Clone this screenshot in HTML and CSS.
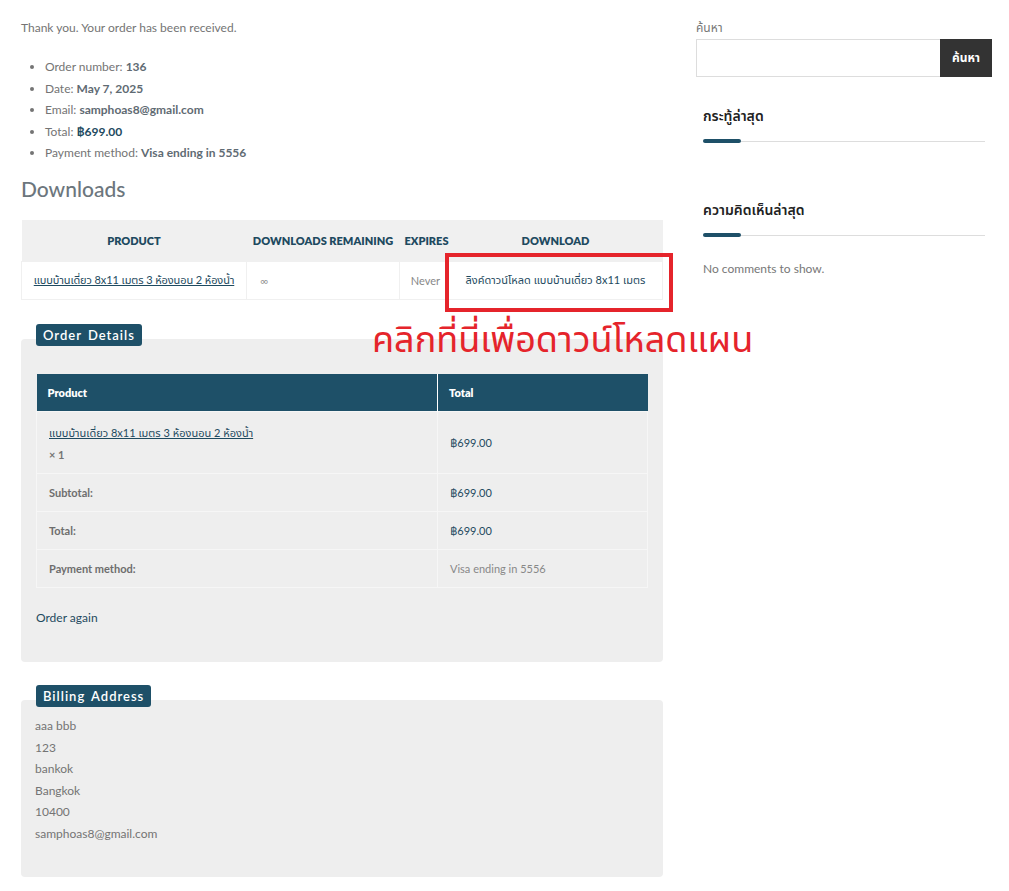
FILE: index.html
```html
<html lang="th">

<head>
  <meta charset="UTF-8">
  <meta name="viewport" content="width=device-width, initial-scale=1.0">
  <title>Order received</title>
  <link rel="stylesheet" href="styles.css">
</head>

<body>
  <div class="page">
    <div class="main">
      <p class="thanks">Thank you. Your order has been received.</p>

      <ul class="overview">
        <li>Order number: <strong>136</strong></li>
        <li>Date: <strong>May 7, 2025</strong></li>
        <li>Email: <strong>samphoas8@gmail.com</strong></li>
        <li>Total: <strong class="price">฿699.00</strong></li>
        <li>Payment method: <strong>Visa ending in 5556</strong></li>
      </ul>

      <div class="downloads">
        <h2>Downloads</h2>
        <table class="dl-table">
          <thead>
            <tr>
              <th class="c-product">Product</th>
              <th class="c-remain">Downloads remaining</th>
              <th class="c-expires">Expires</th>
              <th class="c-file">Download</th>
            </tr>
          </thead>
          <tbody>
            <tr>
              <td class="c-product"><a href="#">แบบบ้านเดี่ยว 8x11 เมตร 3 ห้องนอน 2 ห้องน้ำ</a></td>
              <td class="c-remain">∞</td>
              <td class="c-expires">Never</td>
              <td class="c-file"><a href="#">ลิงค์ดาวน์โหลด แบบบ้านเดี่ยว 8x11 เมตร</a></td>
            </tr>
          </tbody>
        </table>
        <!-- กรอบแดงกับข้อความแนะนำ วางทับบนตาราง -->
        <div class="mark-box"></div>
        <div class="mark-text">คลิกที่นี่เพื่อดาวน์โหลดแผน</div>
      </div>

      <section class="panel order-panel">
        <span class="badge">Order Details</span>
        <table class="od-table">
          <thead>
            <tr>
              <th>Product</th>
              <th>Total</th>
            </tr>
          </thead>
          <tbody>
            <tr class="item-row">
              <td>
                <a href="#">แบบบ้านเดี่ยว 8x11 เมตร 3 ห้องนอน 2 ห้องน้ำ</a>
                <div class="qty">× 1</div>
              </td>
              <td class="amount">฿699.00</td>
            </tr>
            <tr>
              <th>Subtotal:</th>
              <td class="amount">฿699.00</td>
            </tr>
            <tr>
              <th>Total:</th>
              <td class="amount">฿699.00</td>
            </tr>
            <tr>
              <th>Payment method:</th>
              <td class="muted">Visa ending in 5556</td>
            </tr>
          </tbody>
        </table>
        <a class="again" href="#">Order again</a>
      </section>

      <section class="panel billing-panel">
        <span class="badge">Billing Address</span>
        <address>
          aaa bbb<br>
          123<br>
          bankok<br>
          Bangkok<br>
          10400<br>
          samphoas8@gmail.com
        </address>
      </section>
    </div>

    <aside class="sidebar">
      <form class="search">
        <label for="s">ค้นหา</label>
        <div class="search-row">
          <input id="s" type="text">
          <button type="button">ค้นหา</button>
        </div>
      </form>

      <div class="widget">
        <h3>กระทู้ล่าสุด</h3>
      </div>

      <div class="widget">
        <h3>ความคิดเห็นล่าสุด</h3>
        <p class="empty">No comments to show.</p>
      </div>
    </aside>
  </div>
</body>

</html>
```

FILE: styles.css
```css
* {
  padding: 0;
  margin: 0;
  box-sizing: border-box;
}

body {
  background-color: #fff;
  color: #747474;
  font-family: Lato, "Noto Sans", "Noto Sans Thai", sans-serif;
  font-size: 12px;
}

a {
  color: #1e4a60;
}

.page {
  display: flex;
  padding: 19px 17px 0 21px;
  gap: 33px;
}

.main {
  width: 642px;
}

.thanks {
  line-height: 17px;
  margin-bottom: 20px;
}

.overview {
  list-style: disc;
  padding-left: 24px;
  margin-bottom: 11px;
}

.overview li {
  line-height: 21.6px;
}

.overview strong {
  color: #5f6b73;
}

.overview .price {
  color: #1e4a60;
}

/* downloads */
.downloads {
  position: relative;
}

.downloads h2 {
  font-size: 21px;
  font-weight: 500;
  color: #6c767d;
  line-height: 28px;
  margin-bottom: 17px;
}

.dl-table {
  width: 100%;
  border-collapse: collapse;
}

.dl-table th {
  background-color: #f0f0f0;
  color: #1e4a60;
  font-size: 11px;
  font-weight: 800;
  text-transform: uppercase;
  height: 42px;
  text-align: center;
}

.dl-table td {
  height: 38px;
  border: 1px solid #f0f0f0;
  font-size: 11px;
  padding: 0 10px;
  white-space: nowrap;
}

.dl-table .c-product {
  width: 225px;
  text-align: center;
}

.dl-table td.c-product {
  padding: 0 6px;
  letter-spacing: -0.1px;
}

.dl-table .c-remain {
  width: 153px;
}

.dl-table td.c-remain {
  padding-left: 13px;
  color: #999;
}

.dl-table .c-expires {
  width: 49px;
  text-align: right;
}

.dl-table td.c-expires {
  padding-right: 8px;
  color: #888;
}

.dl-table .c-file {
  text-align: center;
}

.dl-table .c-file a {
  text-decoration: none;
}

.mark-box {
  position: absolute;
  left: 424px;
  top: 78px;
  width: 228px;
  height: 59px;
  border: 4px solid #e5242b;
  z-index: 2;
}

.mark-text {
  position: absolute;
  left: 351px;
  top: 141px;
  font-size: 36px;
  line-height: 44px;
  color: #e5242b;
  white-space: nowrap;
  z-index: 2;
}

/* panels */
.panel {
  position: relative;
  background-color: #eeeeee;
  border-radius: 4px;
  padding: 35px 15px 37px;
}

.order-panel {
  margin-top: 39px;
}

.billing-panel {
  margin-top: 38px;
  padding: 15px 14px 32px;
  min-height: 177px;
}

.badge {
  position: absolute;
  left: 15px;
  top: -15px;
  background-color: #1e5068;
  color: #fff;
  font-size: 13px;
  font-weight: 600;
  letter-spacing: 1px;
  word-spacing: 2px;
  border-radius: 3px;
  padding: 2px 7px;
  line-height: 18px;
}

.od-table {
  width: 100%;
  border-collapse: collapse;
}

.od-table thead th {
  background-color: #1e5068;
  color: #fff;
  font-size: 11px;
  font-weight: 800;
  text-align: left;
  height: 37px;
  padding: 0 11px;
}

.od-table thead th + th {
  border-left: 1px solid #fff;
}

.od-table td,
.od-table tbody th {
  border: 1px solid #f6f6f6;
  height: 38px;
  padding: 0 12px;
  font-size: 11px;
  text-align: left;
}

.od-table tbody th {
  width: 401px;
  color: #6d6d6d;
  font-weight: 700;
}

.od-table .item-row td {
  height: 62px;
}

.od-table .item-row td:first-child {
  padding-top: 2px;
}

.qty {
  font-weight: 700;
  margin-top: 6px;
}

.amount {
  color: #1e4a60;
}

.muted {
  color: #888;
}

.again {
  display: block;
  margin-top: 22px;
  text-decoration: none;
  font-size: 12px;
}

address {
  font-style: normal;
  line-height: 21.6px;
}

/* sidebar */
.sidebar {
  width: 296px;
}

.search label {
  display: block;
  font-size: 12px;
  line-height: 17px;
  color: #777;
  margin-bottom: 3px;
}

.search-row {
  display: flex;
  height: 38px;
}

.search input {
  flex: 1;
  border: 1px solid #ddd;
  border-right: none;
}

.search button {
  width: 52px;
  border: none;
  background-color: #333;
  color: #fff;
  font-family: inherit;
  font-size: 12px;
  font-weight: 700;
}

.widget {
  margin: 29px 7px 0;
}

.widget + .widget {
  margin-top: 58px;
}

.widget h3 {
  position: relative;
  font-size: 14px;
  font-weight: 600;
  color: #222;
  line-height: 20px;
  padding-bottom: 15px;
  border-bottom: 1px solid #ddd;
}

.widget h3::after {
  content: '';
  position: absolute;
  left: 0;
  bottom: -2px;
  width: 38px;
  height: 4px;
  border-radius: 4px;
  background-color: #1e5068;
}

.empty {
  margin-top: 25px;
  color: #777;
}
```
